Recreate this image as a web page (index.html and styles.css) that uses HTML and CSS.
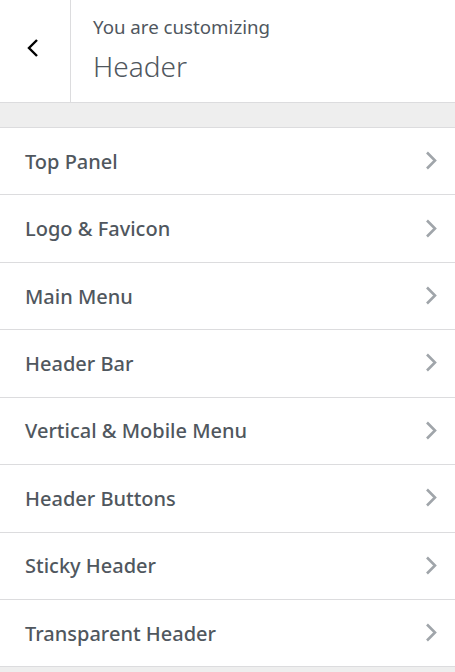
FILE: index.html
```html
<!DOCTYPE html>
<html>
<head>
<meta charset="utf-8">
<link rel="stylesheet" href="styles.css">
</head>
<body>
<div class="panel">
  <div class="head">
    <button class="back" aria-label="Back">
      <svg width="14" height="20" viewBox="0 0 14 20"><path d="M11 2 L3 10 L11 18" fill="none" stroke="#000" stroke-width="2.4"/></svg>
    </button>
    <div class="title">
      <span class="sub">You are customizing</span>
      <span class="main">Header</span>
    </div>
  </div>
  <div class="band"></div>
  <ul class="list">
    <li class="item"><span>Top Panel</span><svg class="chev" width="13" height="19" viewBox="0 0 13 19"><path d="M2 1.5 L10 9.5 L2 17.5" fill="none" stroke="#a0a5aa" stroke-width="2.6"/></svg></li>
    <li class="item"><span>Logo &amp; Favicon</span><svg class="chev" width="13" height="19" viewBox="0 0 13 19"><path d="M2 1.5 L10 9.5 L2 17.5" fill="none" stroke="#a0a5aa" stroke-width="2.6"/></svg></li>
    <li class="item"><span>Main Menu</span><svg class="chev" width="13" height="19" viewBox="0 0 13 19"><path d="M2 1.5 L10 9.5 L2 17.5" fill="none" stroke="#a0a5aa" stroke-width="2.6"/></svg></li>
    <li class="item"><span>Header Bar</span><svg class="chev" width="13" height="19" viewBox="0 0 13 19"><path d="M2 1.5 L10 9.5 L2 17.5" fill="none" stroke="#a0a5aa" stroke-width="2.6"/></svg></li>
    <li class="item"><span>Vertical &amp; Mobile Menu</span><svg class="chev" width="13" height="19" viewBox="0 0 13 19"><path d="M2 1.5 L10 9.5 L2 17.5" fill="none" stroke="#a0a5aa" stroke-width="2.6"/></svg></li>
    <li class="item"><span>Header Buttons</span><svg class="chev" width="13" height="19" viewBox="0 0 13 19"><path d="M2 1.5 L10 9.5 L2 17.5" fill="none" stroke="#a0a5aa" stroke-width="2.6"/></svg></li>
    <li class="item"><span>Sticky Header</span><svg class="chev" width="13" height="19" viewBox="0 0 13 19"><path d="M2 1.5 L10 9.5 L2 17.5" fill="none" stroke="#a0a5aa" stroke-width="2.6"/></svg></li>
    <li class="item"><span>Transparent Header</span><svg class="chev" width="13" height="19" viewBox="0 0 13 19"><path d="M2 1.5 L10 9.5 L2 17.5" fill="none" stroke="#a0a5aa" stroke-width="2.6"/></svg></li>
  </ul>
</div>
</body>
</html>
```
FILE: styles.css
```css
* { box-sizing: border-box; }
html, body { margin: 0; padding: 0; }
body {
  background: #eeeeee;
  font-family: "Noto Sans", "Open Sans", sans-serif;
  width: 455px;
  height: 672px;
  overflow: hidden;
}
.head {
  display: flex;
  height: 103px;
  background: #fff;
  border-bottom: 1px solid #dcdcde;
}
.back {
  width: 71px;
  border: 0;
  border-right: 1px solid #dcdcde;
  background: #fff;
  display: flex;
  align-items: center;
  justify-content: center;
  padding: 0 5px 6px 0;
}
.title {
  display: flex;
  flex-direction: column;
  padding: 14px 0 0 22px;
}
.sub {
  font-size: 18.7px;
  color: #50575e;
  line-height: 26px;
}
.main {
  font-size: 28px;
  font-weight: 300;
  color: #50575e;
  line-height: 36px;
  margin-top: 8px;
}
.band {
  height: 25px;
  background: #eeeeee;
  border-bottom: 1px solid #dcdcde;
}
.list {
  list-style: none;
  margin: 0;
  padding: 0;
  background: #fff;
}
.item {
  display: flex;
  align-items: center;
  justify-content: space-between;
  height: 67.43px;
  padding: 0 17px 0 25px;
  border-bottom: 1px solid #dcdcde;
  font-size: 20px;
  font-weight: 500;
  color: #50575e;
}
.chev { margin-top: -1px; }
```
